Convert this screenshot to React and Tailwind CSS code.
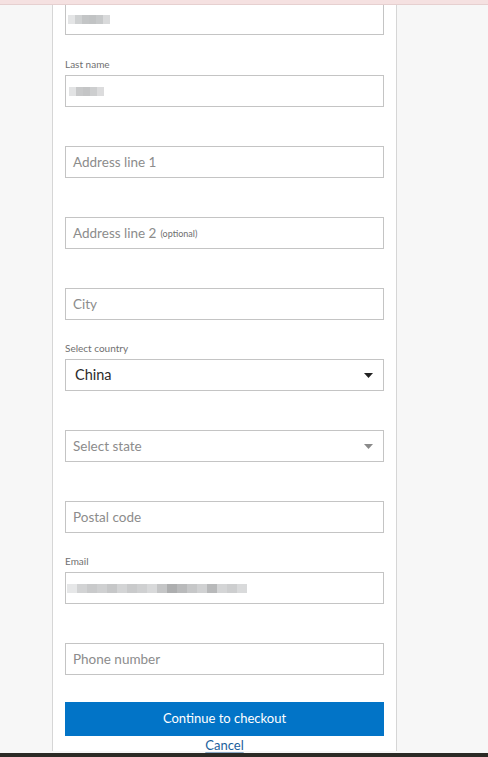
import React from 'react';

const font = { fontFamily: 'Lato, "Open Sans", sans-serif' };

// pixelated placeholder for redacted values
function Redacted({ cells, w = 'w-[8px]' }) {
  return (
    <div className="flex items-center h-[10px] blur-[0.6px]">
      {cells.map((c, i) => (
        <span key={i} className={`block ${w} h-[9px]`} style={{ backgroundColor: c }} />
      ))}
    </div>
  );
}

function Caret({ dark }) {
  return (
    <svg width="9" height="5" viewBox="0 0 9 5" className="shrink-0">
      <path d="M0 0h9L4.5 5z" fill={dark ? '#222' : '#8a8a8a'} />
    </svg>
  );
}

function Field({ label, children, className = '' }) {
  return (
    <div className={`mb-[21px] ${className}`}>
      <div className="h-[14px] text-[10px] leading-[14px] text-[#707070]">{label}</div>
      <div className="mt-[4px] h-[32px] border border-[#c4c4c4] bg-white flex items-center px-[7px]">
        {children}
      </div>
    </div>
  );
}

function Placeholder({ children }) {
  return <span className="text-[13.5px] text-[#8c8c8c]">{children}</span>;
}

export default function App() {
  return (
    <div className="w-full h-[757px] flex flex-col overflow-hidden bg-[#f7f7f7]" style={font}>
      <div className="h-[5px] shrink-0 bg-[#f5e1e1] border-b border-[#e6d0d0]" />

      <div className="flex-1 overflow-hidden">
        <div className="ml-[52px] w-[345px] h-full bg-white border-x border-[#d6d6d6] px-[12px]">
          {/* first-name input, scrolled partly out of view */}
          <div className="-mt-[2px] mb-[22px] h-[32px] border border-[#c4c4c4] flex items-center px-[2px]">
            <Redacted cells={['#e4e5e6', '#cfd1d2', '#c3c5c6', '#c1c3c4', '#c7c9ca', '#d9dadb']} w="w-[7px]" />
          </div>

          <Field label="Last name" className="[&>div:last-child]:px-[3px]">
            <Redacted cells={['#e2e3e4', '#c8c9ca', '#c4c5c6', '#cdcecf', '#dcdcdd']} w="w-[7px]" />
          </Field>

          <Field>
            <Placeholder>Address line 1</Placeholder>
          </Field>

          <Field>
            <Placeholder>Address line 2</Placeholder>
            <span className="ml-[4px] mt-[2px] text-[9px] text-[#6e6e6e]">(optional)</span>
          </Field>

          <Field>
            <Placeholder>City</Placeholder>
          </Field>

          <Field label="Select country">
            <div className="flex-1 flex items-center justify-between pl-[2px] pr-[3px]">
              <span className="text-[14.5px] text-[#2b2b2b]">China</span>
              <Caret dark />
            </div>
          </Field>

          <Field>
            <div className="flex-1 flex items-center justify-between pr-[3px]">
              <Placeholder>Select state</Placeholder>
              <Caret />
            </div>
          </Field>

          <Field>
            <Placeholder>Postal code</Placeholder>
          </Field>

          <Field label="Email" className="[&>div:last-child]:px-[1px]">
            <Redacted
              w="w-[10px]"
              cells={[
                '#e6e7e8', '#d2d3d4', '#c9cacb', '#cfd0d1', '#c6c7c8', '#d3d4d5', '#c9cacb', '#cfd0d1', '#d8d9da',
                '#c4c5c6', '#adaeaf', '#b9babb', '#c6c7c8', '#d0d1d2', '#b8b9ba', '#d4d5d6', '#cdcecf', '#d9dadb',
              ]}
            />
          </Field>

          <Field>
            <Placeholder>Phone number</Placeholder>
          </Field>

          <button className="mt-[27px] w-full h-[34px] bg-[#0274c7] text-white text-[13px] flex items-center justify-center">
            Continue to checkout
          </button>
          <div className="text-center leading-[15px]">
            <span className="text-[13px] text-[#1d5f9c] underline underline-offset-2 decoration-[#8aa9c6]">Cancel</span>
          </div>
        </div>
      </div>

      <div className="h-[4px] shrink-0 bg-[#2b2a25]" />
    </div>
  );
}
